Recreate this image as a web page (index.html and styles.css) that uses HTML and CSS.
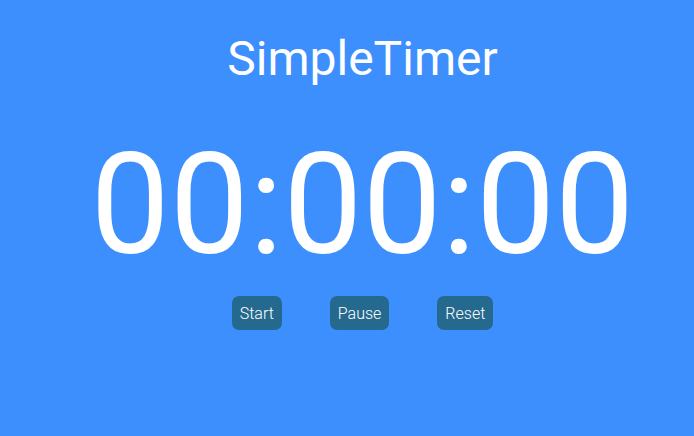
FILE: index.html
```html
<!DOCTYPE html>
<html>
<head>
<meta charset="utf-8">
<link rel="stylesheet" href="styles.css">
</head>
<body>
<main class="app">
  <h1 class="title">SimpleTimer</h1>
  <div class="clock">00:00:00</div>
  <div class="controls">
    <button class="btn">Start</button>
    <button class="btn">Pause</button>
    <button class="btn">Reset</button>
  </div>
</main>
</body>
</html>
```
FILE: styles.css
```css
html, body {
  margin: 0;
  height: 100%;
  background: #3d8ffe;
}
body {
  font-family: Roboto, "Liberation Sans", sans-serif;
  color: #fff;
}
.app {
  display: flex;
  flex-direction: column;
  align-items: center;
  padding-top: 27px;
  padding-left: 31px;
}
.title {
  margin: 0;
  font-size: 48px;
  font-weight: 400;
  line-height: 64px;
}
.clock {
  margin-top: 39px;
  font-size: 141px;
  font-weight: 400;
  line-height: 150px;
}
.controls {
  margin-top: 16px;
  display: flex;
  gap: 48px;
}
.btn {
  font-family: inherit;
  font-size: 16px;
  font-weight: 300;
  color: #fff;
  background: #256a8e;
  border: none;
  border-radius: 7px;
  height: 34px;
  padding: 0 8px;
}
```
